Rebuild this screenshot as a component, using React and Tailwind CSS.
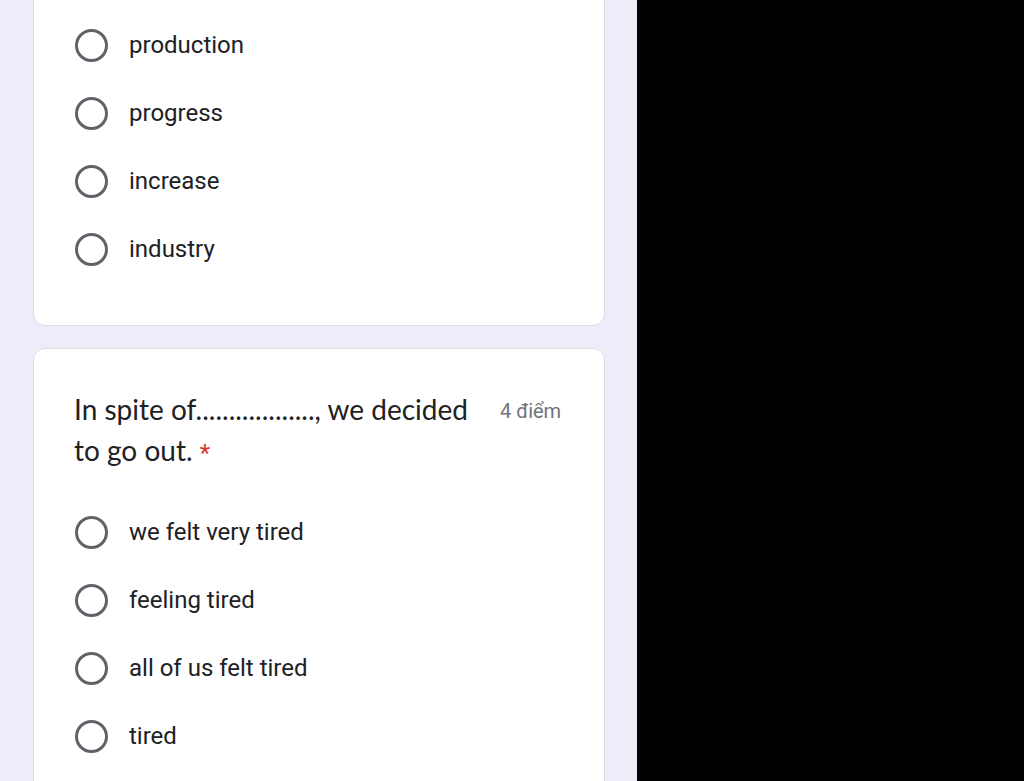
const firstOptions = ["production", "progress", "increase", "industry"];
const secondOptions = ["we felt very tired", "feeling tired", "all of us felt tired", "tired"];

function Radio({ label }) {
    return (
        <div className="flex h-[68px] items-center">
            <div className="ml-[41px] h-[33px] w-[33px] shrink-0 rounded-full border-[3px] border-[#5f6368]" />
            <span className="ml-[21px] text-[24px] leading-none text-[#202124] [font-family:Roboto,'Liberation_Sans',sans-serif]">
                {label}
            </span>
        </div>
    );
}

export default function App() {
    return (
        <div className="flex h-[781px] w-[1024px] overflow-hidden">
            <div className="h-full w-[637px] overflow-hidden bg-[#f0ebf8] pl-[33px]">
                <div className="-mt-[24px] w-[572px] rounded-xl border border-[#dadce0] bg-white pt-[34px] pb-[42px]">
                    {firstOptions.map((o) => (
                        <Radio key={o} label={o} />
                    ))}
                </div>

                <div className="mt-[22px] w-[572px] rounded-xl border border-[#dadce0] bg-white pt-[40px] pb-[48px]">
                    <div className="flex items-start pl-[40px]">
                        <p className="w-[410px] text-[28px] leading-[41px] text-[#202124] [font-family:Lato,'Noto_Sans',sans-serif]">
                            In spite of.................., we decided to go out.{" "}
                            <span className="text-[24px] leading-none text-[#d93025] [font-family:Roboto,sans-serif]">*</span>
                        </p>
                        <span className="ml-[16px] pt-[12px] text-[20px] leading-none text-[#70757a] [font-family:Roboto,sans-serif]">
                            4 điểm
                        </span>
                    </div>
                    <div className="mt-[27px]">
                        {secondOptions.map((o) => (
                            <Radio key={o} label={o} />
                        ))}
                    </div>
                </div>
            </div>
            <div className="h-full flex-1 bg-black" />
        </div>
    );
}
